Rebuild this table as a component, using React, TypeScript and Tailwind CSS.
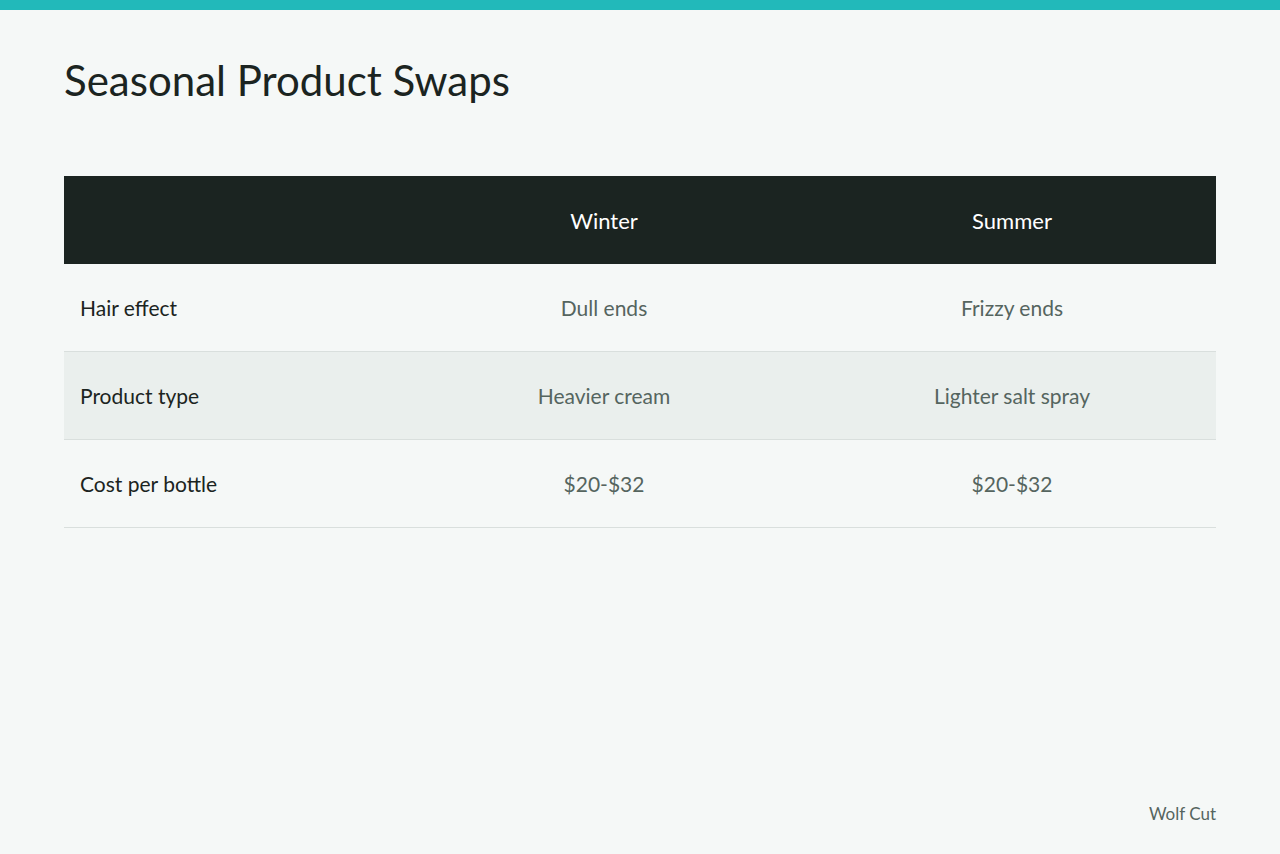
export default function App() {
  const rows = [
    { label: "Hair effect", winter: "Dull ends", summer: "Frizzy ends", striped: false },
    { label: "Product type", winter: "Heavier cream", summer: "Lighter salt spray", striped: true },
    { label: "Cost per bottle", winter: "$20-$32", summer: "$20-$32", striped: false },
  ];
  return (
    <div
      className="w-[1280px] h-[854px] bg-[#f5f8f7] flex flex-col"
      style={{ fontFamily: "Lato, 'Noto Sans', sans-serif" }}
    >
      <div className="h-[10px] bg-[#22b9ba] shrink-0" />
      <div className="flex-1 flex flex-col px-16">
        <h1 className="mt-[48px] text-[42px] leading-[44px] text-[#1b2421] font-normal">
          Seasonal Product Swaps
        </h1>
        <div className="mt-[74px] flex flex-col">
          <div className="grid grid-cols-[336px_408px_408px] h-[88px] bg-[#1b2421] text-white text-[22px] items-center">
            <div />
            <div className="text-center">Winter</div>
            <div className="text-center">Summer</div>
          </div>
          {rows.map((r) => (
            <div
              key={r.label}
              className={`grid grid-cols-[336px_408px_408px] h-[88px] items-center text-[21px] border-b border-[#d9dfdd] ${
                r.striped ? "bg-[#eaefed]" : ""
              }`}
            >
              <div className="pl-4 text-[#1b2421]">{r.label}</div>
              <div className="text-center text-[#55655f]">{r.winter}</div>
              <div className="text-center text-[#55655f]">{r.summer}</div>
            </div>
          ))}
        </div>
        <div className="mt-auto mb-[28px] text-right text-[17px] text-[#55655f]">Wolf Cut</div>
      </div>
    </div>
  );
}
